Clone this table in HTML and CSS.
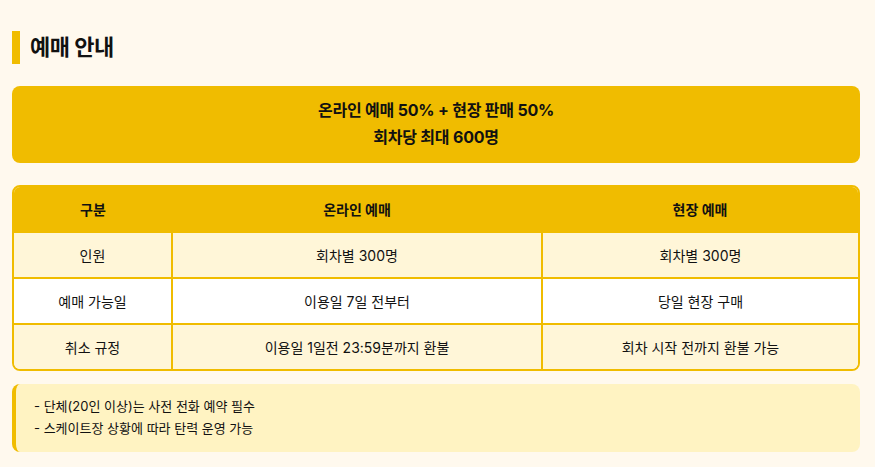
FILE: index.html
```html
<!DOCTYPE html>
<html lang="ko">
<head>
<meta charset="utf-8">
<link rel="stylesheet" href="styles.css">
</head>
<body>
<div class="page">
  <h2 class="title">예매 안내</h2>
  <div class="banner">
    <p>온라인 예매 50% + 현장 판매 50%</p>
    <p>회차당 최대 600명</p>
  </div>
  <div class="table-wrap">
    <table class="info">
      <colgroup>
        <col class="c1"><col class="c2"><col class="c3">
      </colgroup>
      <thead>
        <tr><th>구분</th><th>온라인 예매</th><th>현장 예매</th></tr>
      </thead>
      <tbody>
        <tr class="alt"><td>인원</td><td>회차별 300명</td><td>회차별 300명</td></tr>
        <tr><td>예매 가능일</td><td>이용일 7일 전부터</td><td>당일 현장 구매</td></tr>
        <tr class="alt"><td>취소 규정</td><td>이용일 1일전 23:59분까지 환불</td><td>회차 시작 전까지 환불 가능</td></tr>
      </tbody>
    </table>
  </div>
  <div class="note">
    <p>- 단체(20인 이상)는 사전 전화 예약 필수</p>
    <p>- 스케이트장 상황에 따라 탄력 운영 가능</p>
  </div>
</div>
</body>
</html>
```
FILE: styles.css
```css
html, body {
  margin: 0;
  padding: 0;
  background: #fff9ee;
}
body {
  font-family: "Inter", "Noto Sans CJK KR", "Noto Sans", sans-serif;
  color: #111;
}
.page {
  padding: 31px 15px 16px 12px;
}
.title {
  margin: 0 0 22px;
  border-left: 8px solid #f0bc00;
  padding-left: 10px;
  font-size: 22px;
  font-weight: 700;
  line-height: 33px;
  letter-spacing: -0.5px;
}
.banner {
  background: #f0bc00;
  border-radius: 8px;
  padding: 11px 0 12px;
  text-align: center;
  font-weight: 700;
  font-size: 16px;
  line-height: 27px;
  letter-spacing: -0.2px;
}
.banner p { margin: 0; }
.table-wrap {
  margin-top: 22px;
  border: 2px solid #f0bc00;
  border-radius: 8px;
  overflow: hidden;
}
.info {
  width: 100%;
  border-collapse: collapse;
  font-size: 14px;
  text-align: center;
}
.c1 { width: 158px; }
.c2 { width: 370px; }
.info th {
  background: #f0bc00;
  font-weight: 700;
  height: 44px;
  padding: 0;
}
.info td {
  height: 44px;
  padding: 0;
  border-top: 2px solid #f0bc00;
  border-left: 2px solid #f0bc00;
  background: #ffffff;
}
.info td:first-child { border-left: none; }
.info tr.alt td { background: #fff6d8; }
.note {
  margin-top: 13px;
  background: #fff3c2;
  border-left: 4px solid #f0bc00;
  border-radius: 8px;
  padding: 11px 0 13px 18px;
  font-size: 13px;
  line-height: 22px;
}
.note p { margin: 0; }
```
